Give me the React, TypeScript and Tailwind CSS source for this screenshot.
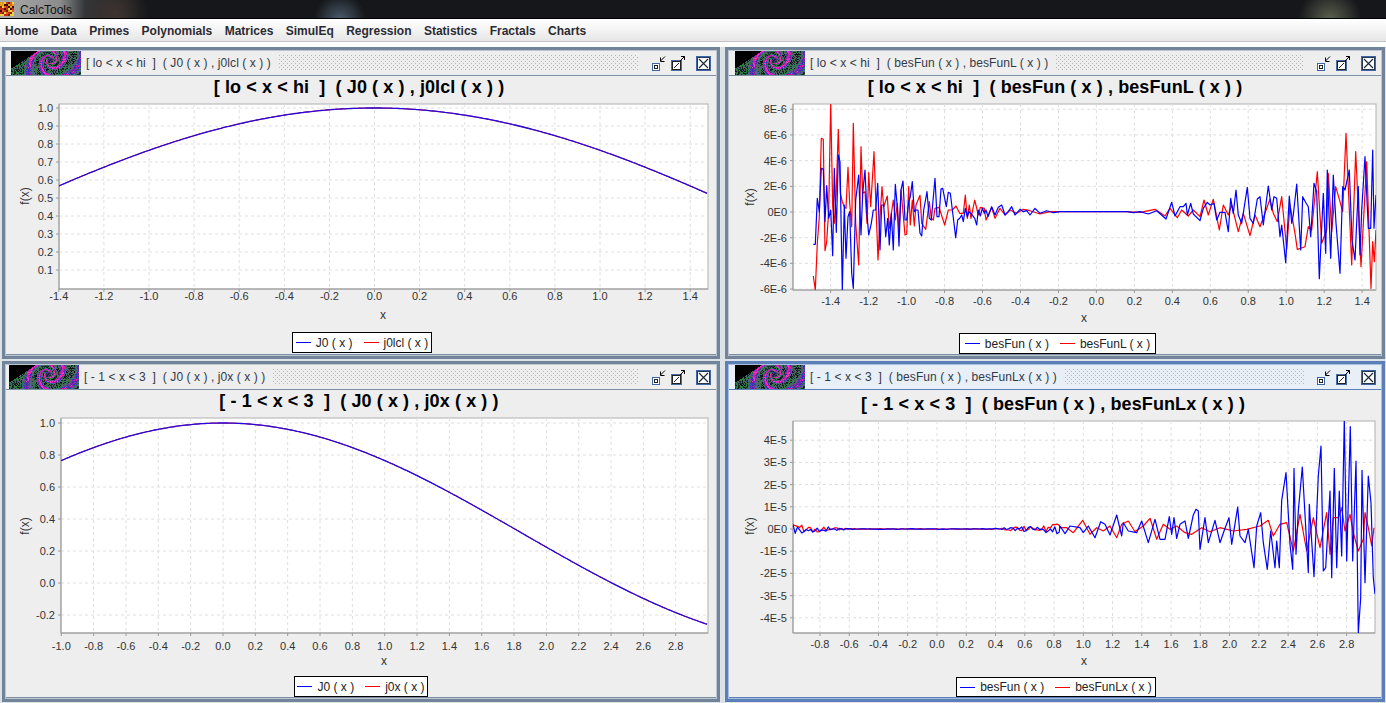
import React from "react";

type P = number[];
const z = (a: P, ox: number, oy: number): [number, number][] => {
  const r: [number, number][] = [];
  for (let i = 0; i < a.length; i += 2) r.push([ox + a[i] / 3, oy + a[i + 1] / 3]);
  return r;
};
function rng(seed: number) {
  let s = seed;
  return () => {
    s = (s * 16807) % 2147483647;
    return s / 2147483647;
  };
}
function noise(x0: number, x1: number, zero: number, env: (x: number) => number, seed: number) {
  const r = rng(seed);
  const out: [number, number][] = [];
  for (let x = x0; x < x1; x += 2.2) out.push([x, zero + (r() - 0.5) * 2 * env(x)]);
  return out;
}
function J0(x: number) {
  let t = 1, s = 1;
  for (let k = 1; k < 14; k++) {
    t *= -(x * x) / 4 / (k * k);
    s += t;
  }
  return s;
}
function curve(x0: number, x1: number, xinv: (px: number) => number, yf: (v: number) => number) {
  const o: [number, number][] = [];
  for (let x = x0; x <= x1; x += 2) o.push([x, yf(J0(xinv(x)))]);
  return o;
}

const trBlueA = [250,463,256,463,262,325,268,365,274,235,280,237,285,395,290,287,296,385,302,360,308,497,313,235,319,427,325,195,330,215,337,600,343,345,348,505,354,380,359,365,365,550,370,595,377,330,386,255,393,435,398,310,405,240,411,375,416,435,424,400,430,360,437,360,443,280,450,480,455,345,461,345,467,440,473,385,478,465,484,370,490,480,496,283,502,350,507,468,513,300,519,273,525,390,530,390,536,335,541,320,547,275,553,365,558,360,564,360,570,430,575,438,581,360,591,305,598,385,604,390,615,265,621,380,627,380,633,297,638,295,649,350,655,307,661,310,672,400,677,443,683,390,689,385,695,375,700,395,706,355,712,380,717,365,723,370,734,385,740,405,745,360,751,378,757,355,763,370,768,360,774,380,785,350,795,375,805,352,815,345,825,375,835,365,845,350,855,375,870,358,880,365,890,362,900,375,915,355,930,370,950,362,970,368,990,365];
const trRedA = [250,558,256,600,262,460,268,380,274,145,280,148,285,482,290,455,296,360,302,40,308,350,313,400,319,300,325,118,331,310,337,335,343,350,348,355,354,232,359,340,365,410,370,100,377,400,386,525,393,170,398,310,405,305,411,400,416,248,422,350,432,185,438,350,444,510,450,380,456,290,461,350,472,318,478,415,490,330,496,390,502,340,507,430,513,300,525,435,530,433,536,290,541,405,547,330,553,408,558,345,570,316,575,400,587,418,598,335,604,385,610,390,615,355,627,352,644,405,655,360,667,360,678,348,689,370,700,370,706,315,712,385,718,345,723,385,734,330,745,375,751,352,763,355,768,390,785,352,795,385,810,355,825,375,840,360,860,370,880,358,900,362,930,372,960,365,990,365];
const trBlueB = [0,365,200,365,220,368,240,365,265,372,290,362,318,387,335,337,345,378,360,350,370,350,378,340,382,375,392,340,400,372,420,392,430,355,442,337,450,345,462,340,470,390,480,367,495,367,505,425,512,325,520,370,528,300,535,375,545,400,562,292,570,385,580,400,592,327,600,320,610,405,625,288,635,360,642,320,650,325,660,440,665,405,677,518,688,318,695,400,700,375,710,282,722,480,728,320,736,335,745,350,752,440,762,280,770,305,778,566,790,310,797,490,802,240,812,505,820,255,828,400,840,550,848,290,855,300,868,240,876,450,885,510,895,290,900,495,905,360,915,200,925,415,932,415,938,180,942,415,948,315];
const trRedB = [0,365,200,365,240,367,285,358,315,378,330,355,352,383,365,360,385,378,400,360,420,380,432,330,445,375,460,328,478,420,490,345,505,375,515,345,535,425,550,370,570,437,585,375,600,410,630,328,640,370,652,395,665,320,680,478,690,345,705,430,712,478,722,475,735,470,745,410,755,420,772,245,785,460,800,420,805,250,815,425,827,290,840,335,848,365,858,130,875,525,887,185,903,530,920,215,933,595,938,455,943,515,948,420];
const brBlue = [0,345,15,368,30,345,60,350,70,365,85,345,105,380,122,332,135,340,150,372,170,312,185,375,190,335,205,360,230,365,245,330,265,395,285,325,300,385,315,385,328,317,335,370,342,320,350,382,360,340,375,330,385,382,400,312,408,295,415,300,420,415,435,320,445,395,465,328,480,395,495,352,507,320,515,400,533,288,540,375,555,395,565,355,582,470,590,345,602,305,610,395,622,475,632,360,645,470,650,390,658,470,665,268,678,185,690,400,698,475,702,172,708,430,715,300,727,168,745,485,748,280,762,497,775,195,783,105,790,480,797,470,810,240,815,500,823,172,830,470,838,240,845,435,853,25,860,450,871,47,878,450,888,150,895,665,902,560,906,178,915,515,925,195,933,275,940,500,945,550];
const brRed = [0,350,20,350,40,365,68,328,90,370,110,350,130,360,150,345,170,380,185,340,205,330,225,362,250,345,270,322,290,385,310,340,330,355,350,345,375,365,395,370,425,350,450,362,480,350,520,360,560,355,600,345,625,328,640,375,660,340,680,335,700,420,720,310,740,420,760,320,780,410,800,305,810,430,820,320,835,320,845,290,855,360,870,310,880,365,895,420,910,385,915,305,925,350,935,405,942,350];

const brEnv = (x: number) => (x < 850 ? 0.6 + 4 * (1 - (x - 793) / 57) : x < 990 ? 0.3 : 0.3 + (x - 990) * 0.07);

const range = (a: number, n: number, s: number) => Array.from({ length: n }, (_, i) => +(a + i * s).toFixed(1));

type Chart = {
  ox: number; oy: number; w: number; h: number;
  plot: [number, number, number, number];
  xt: number[]; xf: (v: number) => number;
  yt: { v: number; l: string }[]; yf: (v: number) => number;
  xLab: number; xTitle: number; xMid: number; fy: number; fx: number; id: string;
  lines: { c: string; pts: [number, number][]; sw: number }[];
};

const fmtE = (e: number) => (v: number) => (v === 0 ? "0E0" : `${v}E-${e}`);

const tlX = (v: number) => 374.5 + 225.5 * v;
const tlY = (v: number) => 108 + (1 - v) * 180;
const blX = (v: number) => 223 + 161.7 * v;
const blY = (v: number) => 582 - 160 * v;
const trX = (v: number) => 1096.4 + 189.8 * v;
const trY = (v: number) => 212 - 12.85 * v;
const brX = (v: number) => 937 + 146.3 * v;
const brY = (v: number) => 528 - 22.2 * v;

const fE6 = fmtE(6);
const fE5 = fmtE(5);

const charts: Record<string, Chart> = {
  tl: {
    ox: 6, oy: 104, w: 710, h: 228, plot: [59, 104, 708, 289],
    xt: range(-1.4, 15, 0.2), xf: tlX,
    yt: range(0.1, 10, 0.1).map((v) => ({ v, l: v.toFixed(1) })), yf: tlY,
    xLab: 300, xTitle: 319, xMid: 383, fx: 29, fy: 196, id: "c1",
    lines: [
      { c: "#ff0000", sw: 1, pts: curve(59, 708, (p) => (p - 374.5) / 225.5, tlY) },
      { c: "#2408e0", sw: 1.3, pts: curve(59, 708, (p) => (p - 374.5) / 225.5, tlY) },
    ],
  },
  tr: {
    ox: 729, oy: 104, w: 652, h: 229, plot: [793, 104, 1376, 290],
    xt: range(-1.4, 15, 0.2), xf: trX,
    yt: [8, 6, 4, 2, 0, -2, -4, -6].map((v) => ({ v, l: fE6(v) })), yf: trY,
    xLab: 305, xTitle: 322, xMid: 1084, fx: 754, fy: 197, id: "c2",
    lines: [
      { c: "#ff0000", sw: 1.2, pts: [...z(trRedA, 730, 90), ...z(trRedB, 1060, 90)] },
      { c: "#0000ff", sw: 1.2, pts: [...z(trBlueA, 730, 90), ...z(trBlueB, 1060, 90)] },
    ],
  },
  bl: {
    ox: 6, oy: 417, w: 710, h: 258, plot: [61, 417, 708, 632],
    xt: range(-1, 20, 0.2), xf: blX,
    yt: [1, 0.8, 0.6, 0.4, 0.2, 0, -0.2].map((v) => ({ v, l: v.toFixed(1) })), yf: blY,
    xLab: 649, xTitle: 664, xMid: 384, fx: 29, fy: 525, id: "c3",
    lines: [
      { c: "#ff0000", sw: 1, pts: curve(61, 708, (p) => (p - 223) / 161.7, blY) },
      { c: "#2408e0", sw: 1.3, pts: curve(61, 708, (p) => (p - 223) / 161.7, blY) },
    ],
  },
  br: {
    ox: 729, oy: 420, w: 652, h: 256, plot: [793, 420, 1375, 632],
    xt: range(-0.8, 19, 0.2), xf: brX,
    yt: [4, 3, 2, 1, 0, -1, -2, -3, -4].map((v) => ({ v, l: fE5(v) })), yf: brY,
    xLab: 647, xTitle: 664, xMid: 1084, fx: 754, fy: 525, id: "c4",
    lines: [
      { c: "#ff0000", sw: 1.2, pts: [...noise(793, 1060, 528, brEnv, 77), ...z(brRed, 1060, 410)] },
      { c: "#0000ff", sw: 1.2, pts: [...noise(793, 1060, 528, brEnv, 4242), ...z(brBlue, 1060, 410)] },
    ],
  },
};

const FONT = "'Liberation Sans', Arial, sans-serif";

function Plot({ c }: { c: Chart }) {
  const [l, t, r, b] = c.plot;
  return (
    <svg width={c.w} height={c.h} viewBox={`${c.ox} ${c.oy} ${c.w} ${c.h}`} className="block shrink-0 overflow-visible" fontFamily={FONT}>
      <defs>
        <clipPath id={c.id}>
          <rect x={l} y={t} width={r - l} height={b - t} />
        </clipPath>
      </defs>
      <rect x={l} y={t} width={r - l} height={b - t} fill="#ffffff" stroke="#b0b0b0" />
      {c.xt.map((v) => (
        <line key={v} x1={c.xf(v)} x2={c.xf(v)} y1={t} y2={b} stroke="#dedede" strokeDasharray="3 3" />
      ))}
      {c.yt.map((y) => (
        <line key={y.v} x1={l} x2={r} y1={c.yf(y.v)} y2={c.yf(y.v)} stroke="#dedede" strokeDasharray="3 3" />
      ))}
      <line x1={l} x2={l} y1={t} y2={b} stroke="#999999" />
      <line x1={l} x2={r} y1={b} y2={b} stroke="#999999" />
      <g clipPath={`url(#${c.id})`} fill="none" strokeLinejoin="round">
        {c.lines.map((ln, i) => (
          <polyline key={i} points={ln.pts.map((p) => `${p[0].toFixed(1)},${p[1].toFixed(1)}`).join(" ")} stroke={ln.c} strokeWidth={ln.sw} />
        ))}
      </g>
      {c.xt.map((v) => (
        <React.Fragment key={v}>
          <line x1={c.xf(v)} x2={c.xf(v)} y1={b} y2={b + 3} stroke="#999999" />
          <text x={c.xf(v)} y={c.xLab} textAnchor="middle" fontSize="11" fill="#333333">{v.toFixed(1)}</text>
        </React.Fragment>
      ))}
      {c.yt.map((y) => (
        <React.Fragment key={y.v}>
          <line x1={l - 3} x2={l} y1={c.yf(y.v)} y2={c.yf(y.v)} stroke="#999999" />
          <text x={l - 6} y={c.yf(y.v) + 4} textAnchor="end" fontSize="11" fill="#333333">{y.l}</text>
        </React.Fragment>
      ))}
      <text x={c.xMid} y={c.xTitle} textAnchor="middle" fontSize="12" fill="#333333">x</text>
      <text transform={`translate(${c.fx} ${c.fy}) rotate(-90)`} textAnchor="middle" fontSize="12" fill="#333333">f(x)</text>
    </svg>
  );
}

function buildFractal() {
  const r = rng(991);
  const cells: { x: number; y: number; f: string }[] = [];
  const cx = 39, cy = 9;
  for (let y = 0; y < 24; y++) {
    for (let x = 0; x < 70; x++) {
      const n = r();
      const m = r();
      if (y + (17 / 26) * x < 17) continue;
      const dx = x - cx, dy = y - cy;
      const d = Math.hypot(dx, dy) + 0.5;
      const s = Math.atan2(dy, dx) + Math.log(d) * 2.6;
      const w = Math.sin(s * 3) + (m - 0.5) * 0.5 - (d > 22 ? 0.4 : 0);
      let f: string;
      if (d < 3) f = n > 0.5 ? "#3b3f6a" : "#202040";
      else if (w > 0.72) f = n > 0.35 ? "#d81ea8" : "#ff30c8";
      else if (w > 0.35) f = n > 0.5 ? "#3a30b8" : "#7a28b0";
      else if (w > -0.3) f = n > 0.6 ? "#4e6a8a" : n > 0.3 ? "#2a6a50" : "#566468";
      else f = n > 0.65 ? "#2a7a44" : n > 0.35 ? "#18342e" : n > 0.15 ? "#5c5c6c" : "#0c1414";
      cells.push({ x, y, f });
    }
  }
  return cells;
}
const fractal = buildFractal();

function Fractal() {
  return (
    <svg width={70} height={24} viewBox="0 0 70 24" className="block shrink-0 bg-black" shapeRendering="crispEdges">
      {fractal.map((c, i) => (
        <rect key={i} x={c.x} y={c.y} width={1} height={1} fill={c.f} />
      ))}
    </svg>
  );
}

function AppIcon() {
  const r = rng(31);
  const cols = ["#e0a020", "#c83018", "#f0d040", "#802010", "#e06018", "#401008"];
  const rects = [];
  for (let y = 0; y < 7; y++)
    for (let x = 0; x < 7; x++) rects.push(<rect key={`${x}-${y}`} x={x * 2} y={y * 2} width={2} height={2} fill={cols[Math.floor(r() * cols.length)]} />);
  return (
    <svg width={14} height={14} viewBox="0 0 14 14" className="block shrink-0" shapeRendering="crispEdges">
      {rects}
    </svg>
  );
}

function Dots() {
  return (
    <svg height={16} className="block flex-1 min-w-0" shapeRendering="crispEdges">
      <defs>
        <pattern id="dots" width="4" height="4" patternUnits="userSpaceOnUse">
          <rect x="0" y="0" width="1" height="1" fill="#b4b4b4" />
          <rect x="2" y="2" width="1" height="1" fill="#b4b4b4" />
        </pattern>
      </defs>
      <rect width="100%" height="100%" fill="url(#dots)" />
    </svg>
  );
}

function WinIcons() {
  return (
    <div className="flex items-center shrink-0 pr-[5px] pl-[13px]">
      <svg width={14} height={15} viewBox="0 0 14 15" className="block mr-[5px]" shapeRendering="crispEdges">
        <rect x="0.5" y="7.5" width="7" height="7" fill="#ffffff" stroke="#3f66a8" />
        <rect x="2.5" y="9.5" width="3" height="3" fill="#ffffff" stroke="#222222" />
        <path d="M13 0.5 L8.5 5 M8.5 1.5 V5.5 H12.5" fill="none" stroke="#000000" shapeRendering="auto" />
      </svg>
      <svg width={14} height={15} viewBox="0 0 14 15" className="block mr-[11px]">
        <rect x="0.5" y="4.5" width="10" height="10" fill="#ffffff" stroke="#4a6ea8" />
        <rect x="1.5" y="5.5" width="8" height="8" fill="none" stroke="#222222" />
        <path d="M3 12 L8 7" stroke="#222222" />
        <path d="M9 5 L13.5 0.5 M10 0.5 H13.5 V4" fill="none" stroke="#000000" />
      </svg>
      <svg width={15} height={15} viewBox="0 0 15 15" className="block" shapeRendering="crispEdges">
        <rect x="0.5" y="0.5" width="14" height="14" fill="#dfe8f4" stroke="#3f66a8" />
        <rect x="1.5" y="1.5" width="12" height="12" fill="#ffffff" stroke="#26364f" />
        <path d="M3 3 L12 12 M12 3 L3 12" stroke="#1c2a40" strokeWidth="1.2" shapeRendering="auto" />
      </svg>
    </div>
  );
}

function LegendItem({ color, label }: { color: string; label: string }) {
  return (
    <span className="flex items-center gap-[5px]">
      <svg width={15} height={3} viewBox="0 0 15 3" className="block shrink-0" shapeRendering="crispEdges">
        <line x1="0" x2="15" y1="1.5" y2="1.5" stroke={color} />
      </svg>
      <span className="whitespace-pre">{label}</span>
    </span>
  );
}

function Win({
  title, heading, chart, legend, inset, active, headClass, legendClass,
}: {
  title: string; heading: string; chart: Chart; legend: [string, string]; inset: string; active?: boolean; headClass: string; legendClass: string;
}) {
  return (
    <div className={active ? "flex min-h-0 border-[3px] border-[#5b7fb9] bg-[#eeeeee]" : "flex min-h-0 border-[3px] border-[#71849a] bg-[#eeeeee]"}>
      <div className={active ? "flex-1 min-w-0 flex flex-col border border-[#a9bedd]" : "flex-1 min-w-0 flex flex-col border border-[#bcc6d0]"}>
        <div className={active ? `flex items-center h-[24px] shrink-0 ${inset} bg-[#e9eff7]` : `flex items-center h-[24px] shrink-0 ${inset} bg-[#eeeeee]`}>
          <Fractal />
          <span className="ml-[5px] mr-[8px] text-[12px] tracking-[0.08px] whitespace-pre text-[#323a48]">{title}</span>
          <Dots />
          <WinIcons />
        </div>
        <div className={active ? "h-[1px] bg-[#5b7fb9] shrink-0" : "h-[1px] bg-[#7d8fa3] shrink-0"} />
        <div className={`flex justify-center text-[18px] leading-[22px] tracking-[0.1px] font-bold text-black whitespace-pre shrink-0 ${headClass}`}>{heading}</div>
        <Plot c={chart} />
        <div className={`flex self-center justify-center items-center h-[21px] gap-[11px] border border-black bg-white text-[12px] text-[#222222] ${legendClass}`}>
          <LegendItem color="#0000ff" label={legend[0]} />
          <LegendItem color="#ff0000" label={legend[1]} />
        </div>
        <div className={active ? "mt-auto h-[1px] shrink-0 bg-[#5b7fb9]" : "mt-auto h-[1px] shrink-0 bg-[#7d8fa3]"} />
      </div>
    </div>
  );
}

const menu = ["Home", "Data", "Primes", "Polynomials", "Matrices", "SimulEq", "Regression", "Statistics", "Fractals", "Charts"];

export default function App() {
  return (
    <div className="w-[1386px] h-[703px] overflow-hidden flex flex-col bg-[#dde2e7] font-['Liberation_Sans',Arial,sans-serif]">
      <div className="h-[18px] shrink-0 flex items-center gap-[6px] bg-[radial-gradient(circle_at_1330px_20px,#5c6250_0,transparent_32px),radial-gradient(circle_at_340px_20px,#4c5c6e_0,transparent_26px),radial-gradient(circle_at_115px_14px,#3e3430_0,transparent_34px),linear-gradient(90deg,#ababab_0px,#8c8c8c_60px,#34363a_85px,#15171a_140px,#15171a_100%)]">
        <AppIcon />
        <span className="text-[12px] text-[#111111] pt-[1px]">CalcTools</span>
      </div>
      <div className="h-[1px] shrink-0 bg-black" />
      <div className="h-[22px] shrink-0 flex items-center gap-[12.4px] pl-[5px] pt-[1px] bg-[linear-gradient(#ffffff,#f6f6f6_40%,#e6e6e6)] text-[12px] font-bold text-[#2b2b33]">
        {menu.map((m) => (
          <span key={m}>{m}</span>
        ))}
      </div>
      <div className="h-[6px] shrink-0 bg-white border-t border-[#c4c4c4]" />
      <div className="flex-1 min-h-0 grid grid-cols-[718px_660px] grid-rows-[312px_341px] gap-x-[5px] gap-y-[2px] pl-[2px]">
        <Win
          title="[ lo < x < hi  ]  ( J0 ( x ) , j0lcl ( x ) )"
          heading="[ lo < x < hi  ]  ( J0 ( x ) , j0lcl ( x ) )"
          chart={charts.tl}
          legend={["J0 ( x )", "j0lcl ( x )"]}
          inset="pl-[5px]"
          headClass="h-[28px] pr-[4px]"
          legendClass="w-[140px] ml-[2px]"
        />
        <Win
          title="[ lo < x < hi  ]  ( besFun ( x ) , besFunL ( x ) )"
          heading="[ lo < x < hi  ]  ( besFun ( x ) , besFunL ( x ) )"
          chart={charts.tr}
          legend={["besFun ( x )", "besFunL ( x )"]}
          inset="pl-[6px]"
          headClass="h-[28px]"
          legendClass="w-[197px] ml-[5px]"
        />
        <Win
          title="[ - 1 < x < 3  ]  ( J0 ( x ) , j0x ( x ) )"
          heading="[ - 1 < x < 3  ]  ( J0 ( x ) , j0x ( x ) )"
          chart={charts.bl}
          legend={["J0 ( x )", "j0x ( x )"]}
          inset="pl-[3px]"
          headClass="h-[28px] pr-[4px]"
          legendClass="w-[134px]"
        />
        <Win
          title="[ - 1 < x < 3  ]  ( besFun ( x ) , besFunLx ( x ) )"
          heading="[ - 1 < x < 3  ]  ( besFun ( x ) , besFunLx ( x ) )"
          chart={charts.br}
          legend={["besFun ( x )", "besFunLx ( x )"]}
          inset="pl-[6px]"
          active
          headClass="h-[31px] pt-[3px] pr-[4px]"
          legendClass="w-[200px] ml-[2px]"
        />
      </div>
    </div>
  );
}
